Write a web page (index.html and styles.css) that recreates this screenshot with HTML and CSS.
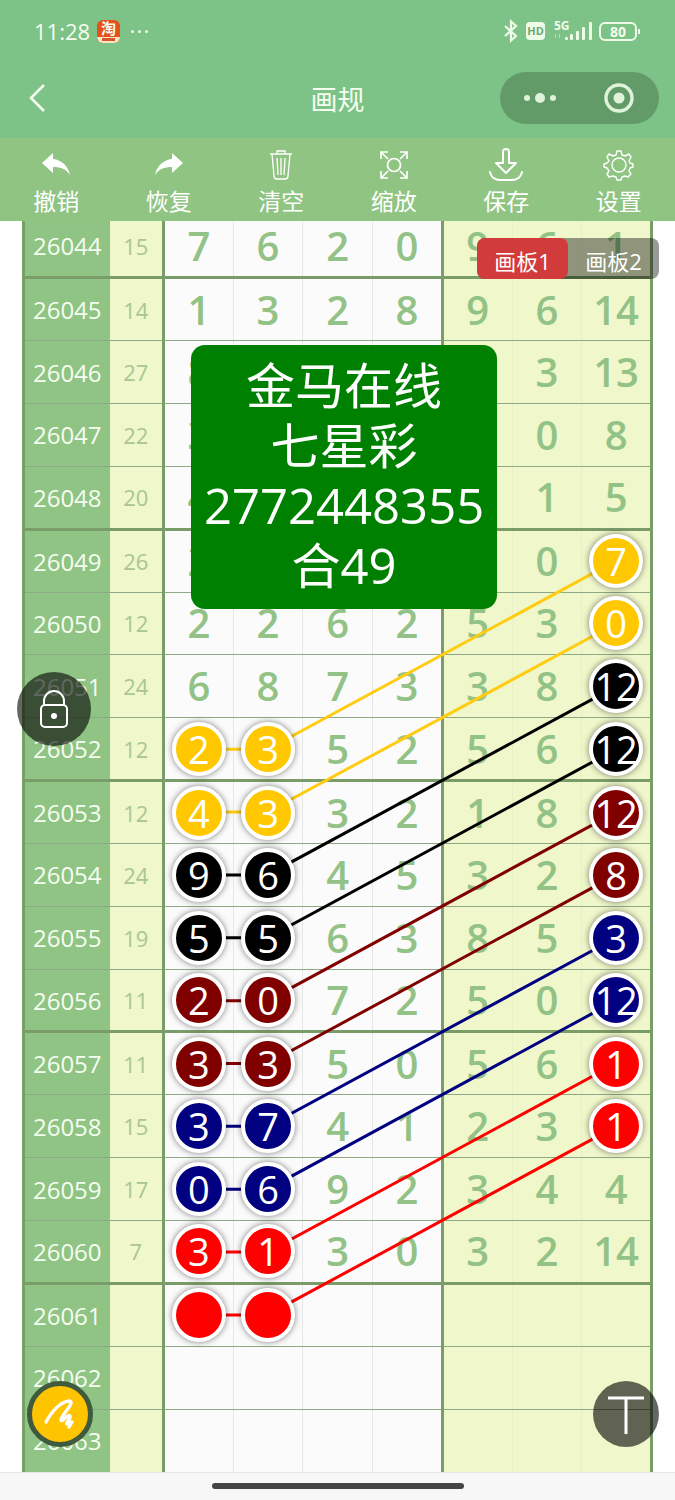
FILE: index.html
```html
<!DOCTYPE html>
<html lang="zh-CN">
<head>
    <meta charset="UTF-8">
    <meta name="viewport" content="width=device-width, initial-scale=1.0">
    <title>画规</title>
    <link rel="stylesheet" href="styles.css">
</head>
<body>
<div class="app">
    <header class="header">
        <div class="status-bar">
            <span class="time">11:28</span>
            <span class="app-badge"><b>淘</b><i></i></span>
            <span class="more-dots"><i></i><i></i><i></i></span>
            <div class="status-icons">
                <svg width="16" height="24" viewBox="0 0 16 24" fill="none" stroke="#effbe9" stroke-width="2.2"><path d="M2 7l11 10-5 4.5v-19L13 7 2 17"/></svg>
                <span class="hd">HD</span>
                <svg class="signal" width="40" height="24" viewBox="0 0 40 24" fill="#effbe9">
                    <text x="0" y="11" font-size="12" font-weight="700">5G</text>
                    <path opacity=".5" d="M1 15h1v4H1zM5 15h1v4H5z"/>
                    <rect x="11" y="18" width="3" height="3" rx="1"/>
                    <rect x="16" y="15" width="3" height="6" rx="1"/>
                    <rect x="22" y="12" width="3" height="9" rx="1"/>
                    <rect x="28" y="8" width="3" height="13" rx="1"/>
                    <rect x="35" y="3" width="3" height="18" rx="1"/>
                </svg>
                <span class="battery">80</span>
            </div>
        </div>
        <div class="nav-bar">
            <button class="back-btn" aria-label="返回">
                <svg width="20" height="30" viewBox="0 0 20 30" fill="none" stroke="#f4fdf0" stroke-width="2.6"><path d="M18 2L5 15l13 13"/></svg>
            </button>
            <h1>画规</h1>
            <div class="capsule">
                <button aria-label="更多"><svg width="32" height="12" viewBox="0 0 32 12" fill="#e0f2da"><circle cx="3" cy="6" r="3"/><circle cx="16" cy="6" r="5"/><circle cx="29" cy="6" r="3"/></svg></button>
                <button aria-label="关闭"><svg width="30" height="30" viewBox="0 0 30 30"><circle cx="15" cy="15" r="13" fill="none" stroke="#e0f2da" stroke-width="3.4"/><circle cx="15" cy="15" r="5.5" fill="#e0f2da"/></svg></button>
            </div>
        </div>
    </header>

    <nav class="toolbar">
        <button class="tool-btn">
            <svg width="34" height="34" viewBox="0 0 34 34" fill="#fff"><path d="M3 15L14 5v6c9 1 15 7 17 16-4-6-9-8-17-8v6z"/></svg>
            撤销
        </button>
        <button class="tool-btn">
            <svg width="34" height="34" viewBox="0 0 34 34" fill="#fff"><path d="M31 15L20 5v6C11 12 5 18 3 27c4-6 9-8 17-8v6z"/></svg>
            恢复
        </button>
        <button class="tool-btn">
            <svg width="34" height="34" viewBox="0 0 34 34" fill="none" stroke="#fff" stroke-width="1.3"><path d="M6 6h22M13 6V3h8v3M8 6l2 22q0 3 3 3h8q3 0 3-3l2-22M13 10l1 17M17 10v17M21 10l-1 17"/></svg>
            清空
        </button>
        <button class="tool-btn">
            <svg width="34" height="34" viewBox="0 0 34 34" fill="none" stroke="#fff" stroke-width="1.7"><circle cx="17" cy="17" r="6.5"/><path d="M4 11V4h7M4 4l7 7M23 4h7v7M30 4l-7 7M4 23v7h7M4 30l7-7M30 23v7h-7M30 30l-7-7"/></svg>
            缩放
        </button>
        <button class="tool-btn">
            <svg width="34" height="34" viewBox="0 0 34 34" fill="none" stroke="#fff" stroke-width="2" stroke-linecap="round" stroke-linejoin="round"><path d="M14 15V4q0-3 3-3t3 3v11h7L17 25 7 15zM1 24c1 5 5 8 10 8h12c5 0 9-3 10-8"/></svg>
            保存
        </button>
        <button class="tool-btn">
            <svg width="34" height="34" viewBox="0 0 34 34" fill="none" stroke="#fff" stroke-width="1.4" stroke-linejoin="round"><circle cx="17" cy="17" r="7"/><path d="M15 3h4l1 4 3 1 4-2 2 3-2 4 1 2 3 1v3l-3 1-1 3 2 3-3 3-3-1-3 1-1 3h-4l-1-3-3-1-4 1-2-3 2-3-2-3-3-1v-3l3-1 2-2-2-4 2-3 4 2 3-1z"/></svg>
            设置
        </button>
    </nav>

    <main class="board">
        <div class="sheet">
            <table class="trend">
                <colgroup><col class="col-period"><col class="col-sum"><col span="7"></colgroup>
                <tbody>
                    <tr class="group-end"><th>26044</th><td>15</td><td>7</td><td>6</td><td>2</td><td>0</td><td>9</td><td>6</td><td>1</td></tr>
                    <tr><th>26045</th><td>14</td><td>1</td><td>3</td><td>2</td><td>8</td><td>9</td><td>6</td><td>14</td></tr>
                    <tr><th>26046</th><td>27</td><td>8</td><td></td><td></td><td></td><td></td><td>3</td><td>13</td></tr>
                    <tr><th>26047</th><td>22</td><td>3</td><td></td><td></td><td></td><td></td><td>0</td><td>8</td></tr>
                    <tr class="group-end"><th>26048</th><td>20</td><td>4</td><td></td><td></td><td></td><td></td><td>1</td><td>5</td></tr>
                    <tr><th>26049</th><td>26</td><td>2</td><td></td><td></td><td></td><td></td><td>0</td><td><span class="ball yellow">7</span></td></tr>
                    <tr><th>26050</th><td>12</td><td>2</td><td>2</td><td>6</td><td>2</td><td>5</td><td>3</td><td><span class="ball yellow">0</span></td></tr>
                    <tr><th>26051</th><td>24</td><td>6</td><td>8</td><td>7</td><td>3</td><td>3</td><td>8</td><td><span class="ball black">12</span></td></tr>
                    <tr class="group-end"><th>26052</th><td>12</td><td><span class="ball yellow">2</span></td><td><span class="ball yellow">3</span></td><td>5</td><td>2</td><td>5</td><td>6</td><td><span class="ball black">12</span></td></tr>
                    <tr><th>26053</th><td>12</td><td><span class="ball yellow">4</span></td><td><span class="ball yellow">3</span></td><td>3</td><td>2</td><td>1</td><td>8</td><td><span class="ball maroon">12</span></td></tr>
                    <tr><th>26054</th><td>24</td><td><span class="ball black">9</span></td><td><span class="ball black">6</span></td><td>4</td><td>5</td><td>3</td><td>2</td><td><span class="ball maroon">8</span></td></tr>
                    <tr><th>26055</th><td>19</td><td><span class="ball black">5</span></td><td><span class="ball black">5</span></td><td>6</td><td>3</td><td>8</td><td>5</td><td><span class="ball navy">3</span></td></tr>
                    <tr class="group-end"><th>26056</th><td>11</td><td><span class="ball maroon">2</span></td><td><span class="ball maroon">0</span></td><td>7</td><td>2</td><td>5</td><td>0</td><td><span class="ball navy">12</span></td></tr>
                    <tr><th>26057</th><td>11</td><td><span class="ball maroon">3</span></td><td><span class="ball maroon">3</span></td><td>5</td><td>0</td><td>5</td><td>6</td><td><span class="ball red">1</span></td></tr>
                    <tr><th>26058</th><td>15</td><td><span class="ball navy">3</span></td><td><span class="ball navy">7</span></td><td>4</td><td>1</td><td>2</td><td>3</td><td><span class="ball red">1</span></td></tr>
                    <tr><th>26059</th><td>17</td><td><span class="ball navy">0</span></td><td><span class="ball navy">6</span></td><td>9</td><td>2</td><td>3</td><td>4</td><td>4</td></tr>
                    <tr class="group-end"><th>26060</th><td>7</td><td><span class="ball red">3</span></td><td><span class="ball red">1</span></td><td>3</td><td>0</td><td>3</td><td>2</td><td>14</td></tr>
                    <tr><th>26061</th><td></td><td><span class="ball red"></span></td><td><span class="ball red"></span></td><td></td><td></td><td></td><td></td><td></td></tr>
                    <tr><th>26062</th><td></td><td></td><td></td><td></td><td></td><td></td><td></td><td></td></tr>
                    <tr><th>26063</th><td></td><td></td><td></td><td></td><td></td><td></td><td></td><td></td></tr>
                </tbody>
            </table>
            <!-- one unit = one cell, 7 columns x 20 rows -->
            <svg class="links" viewBox="0 0 7 20" preserveAspectRatio="none">
                <polyline class="yellow" points="0.5,8.5 1.5,8.5 6.5,5.5"/>
                <polyline class="yellow" points="0.5,9.5 1.5,9.5 6.5,6.5"/>
                <polyline class="black" points="0.5,10.5 1.5,10.5 6.5,7.5"/>
                <polyline class="black" points="0.5,11.5 1.5,11.5 6.5,8.5"/>
                <polyline class="maroon" points="0.5,12.5 1.5,12.5 6.5,9.5"/>
                <polyline class="maroon" points="0.5,13.5 1.5,13.5 6.5,10.5"/>
                <polyline class="navy" points="0.5,14.5 1.5,14.5 6.5,11.5"/>
                <polyline class="navy" points="0.5,15.5 1.5,15.5 6.5,12.5"/>
                <polyline class="red" points="0.5,16.5 1.5,16.5 6.5,13.5"/>
                <polyline class="red" points="0.5,17.5 1.5,17.5 6.5,14.5"/>
            </svg>
        </div>

        <div class="note">金马在线<br>七星彩<br>2772448355<br>合49</div>

        <div class="board-tabs">
            <button class="active">画板1</button>
            <button>画板2</button>
        </div>

        <button class="float-btn lock-btn" aria-label="锁定">
            <svg width="30" height="40" viewBox="0 0 30 40" fill="none" stroke="#fff" stroke-width="2"><rect x="2" y="16" width="26" height="22" rx="4"/><path d="M5 16v-4a10 10 0 0 1 20 0v4"/><circle cx="15" cy="27" r="3" fill="#fff" stroke="none"/></svg>
        </button>
        <button class="float-btn pen-btn" aria-label="画笔">
            <svg width="34" height="34" viewBox="0 0 34 34" fill="none" stroke="#fff" stroke-width="3.4" stroke-linecap="round" stroke-linejoin="round"><path d="M3 25C9 14 18 4 27 4c5 2-9 14-9 19 1 3 7-7 9-4 1 3-5 7-3 8 2 0 4-3 5-2l-3 5"/></svg>
        </button>
        <button class="float-btn text-btn" aria-label="文字">
            <svg width="38" height="40" viewBox="0 0 38 40" stroke="#fff" stroke-width="3"><path d="M1 4h36M19 4v36"/></svg>
        </button>
    </main>

    <footer class="home-bar"><span></span></footer>
</div>
</body>
</html>
```

FILE: styles.css
```css
* {
    box-sizing: border-box;
}

body {
    margin: 0;
    font-family: "Open Sans", "Noto Sans CJK SC", sans-serif;
    background-color: #fff;
}

button {
    border: none;
    padding: 0;
    background: none;
    color: #fff;
    font-family: inherit;
    cursor: pointer;
}

.app {
    display: flex;
    flex-direction: column;
    height: 100vh;
}

/* 顶部 */
.header {
    background-color: #7dc387;
    color: #f4fdf0;
}

.status-bar {
    display: flex;
    align-items: center;
    height: 62px;
    padding: 0 38px 0 34px;
}

.time {
    font-size: 22px;
    font-weight: 500;
    width: 63px;
}

.app-badge {
    display: flex;
    flex-direction: column;
    width: 23px;
    height: 23px;
    border-radius: 6px;
    overflow: hidden;
    background-color: #e5501c;
    text-align: center;
}

.app-badge b {
    font-size: 15px;
    line-height: 17px;
}

.app-badge i {
    flex: 1;
    border: solid #f6e6c4;
    border-width: 1px 5px 2px;
    background-color: #d5552c;
}

.more-dots {
    display: flex;
    gap: 4px;
    margin-left: 11px;
}

.more-dots i {
    width: 3px;
    height: 3px;
    border-radius: 50%;
    background-color: #effbe9;
}

.status-icons {
    display: flex;
    align-items: center;
    margin-left: auto;
}

.hd {
    margin: 0 9px 0 7px;
    width: 19px;
    line-height: 18px;
    border-radius: 4px;
    background-color: #effbe9;
    color: #6aa873;
    font-size: 11px;
    font-weight: 700;
    text-align: center;
}

.signal {
    overflow: visible;
}

.battery {
    position: relative;
    width: 38px;
    margin-left: 5px;
    border: 2px solid #effbe9;
    border-radius: 6px;
    font-size: 14px;
    font-weight: 700;
    line-height: 15px;
    text-align: center;
}

.battery::after {
    content: "";
    position: absolute;
    right: -5px;
    top: 5px;
    width: 2px;
    height: 5px;
    background-color: #effbe9;
}

.nav-bar {
    display: grid;
    grid-template-columns: 1fr auto 1fr;
    align-items: center;
    height: 76px;
    padding: 0 16px 4px;
}

.nav-bar h1 {
    margin: 0;
    font-size: 27px;
    font-weight: 400;
}

.back-btn {
    justify-self: start;
    display: flex;
    margin-left: 10px;
}

.capsule {
    justify-self: end;
    display: flex;
    width: 159px;
    height: 52px;
    border-radius: 26px;
    background-color: #629b68;
}

.capsule button {
    flex: 1;
    display: flex;
    align-items: center;
    justify-content: center;
}

/* 工具栏 */
.toolbar {
    display: flex;
    height: 83px;
    background-color: #90c483;
}

.tool-btn {
    flex: 1;
    display: flex;
    flex-direction: column;
    align-items: center;
    padding-top: 10px;
    font-size: 23px;
    line-height: 38px;
}

.tool-btn svg {
    flex: none;
}

/* 走势图 */
.board {
    position: relative;
    flex: 1;
    min-height: 0;
    display: flex;
    flex-direction: column;
    justify-content: flex-end;
    overflow: hidden;
}

.sheet {
    position: relative;
    flex: none;
    height: calc(100% + 6px);
    margin: 0 22px;
}

.trend {
    width: 100%;
    height: 100%;
    table-layout: fixed;
    border-collapse: collapse;
    text-align: center;
}

.trend tr {
    height: 5%;
}

.col-period {
    width: 86px;
}

.col-sum {
    width: 54px;
}

.trend th,
.trend td {
    padding: 0;
    border-bottom: 1px solid #8fa885;
}

.trend .group-end th,
.trend .group-end td {
    border-bottom: 3px solid #7a9c68;
}

.trend tr:last-child th,
.trend tr:last-child td {
    border-bottom: none;
}

.trend th {
    background-color: #8fc484;
    border-left: 3px solid #76a065;
    color: #f6fdf0;
    font-size: 24px;
    font-weight: 400;
}

.trend td {
    background-color: #fbfbfb;
    border-right: 1px solid #e6e6e6;
    color: #93c287;
    font-size: 40px;
    font-weight: 600;
    line-height: 54px;
}

.trend td:nth-child(2) {
    background-color: #eff7cb;
    border-right: 3px solid #7a9c68;
    color: #a9c692;
    font-size: 22px;
    font-weight: 400;
}

.trend td:nth-child(6) {
    border-right: 3px solid #7a9c68;
}

.trend td:nth-child(n+7) {
    background-color: #eff7cb;
    border-right-color: #e8f1c6;
}

.trend td:last-child {
    border-right: 3px solid #7a9c68;
}

.ball {
    position: relative;
    z-index: 2;
    display: block;
    width: 54px;
    height: 54px;
    margin: 0 auto;
    border: 4px solid #fff;
    border-radius: 50%;
    box-shadow: 0 0 6px rgba(0, 0, 0, 0.5);
    color: #fff;
    font-size: 38px;
    font-weight: 400;
    line-height: 46px;
}

.ball.yellow { background-color: #ffc800; }
.ball.black { background-color: #000; }
.ball.maroon { background-color: #800000; }
.ball.navy { background-color: #000080; }
.ball.red { background-color: #f00; }

.links {
    position: absolute;
    z-index: 1;
    top: 0;
    left: 141px;
    width: calc(100% - 143px);
    height: 100%;
    pointer-events: none;
}

.links polyline {
    fill: none;
    stroke-width: 3px;
    vector-effect: non-scaling-stroke;
}

.links .yellow { stroke: #fc1; }
.links .black { stroke: #000; }
.links .maroon { stroke: #800000; }
.links .navy { stroke: #000080; }
.links .red { stroke: #f00; }

.note {
    position: absolute;
    z-index: 3;
    top: 124px;
    left: 191px;
    padding: 10px 13px 14px;
    border-radius: 14px;
    background-color: #008000;
    color: #fff;
    font-size: 49px;
    line-height: 60px;
    text-align: center;
}

.board-tabs {
    position: absolute;
    z-index: 4;
    top: 17px;
    right: 16px;
    display: flex;
    border-radius: 8px;
    background-color: rgba(0, 0, 0, 0.4);
}

.board-tabs button {
    width: 91px;
    height: 41px;
    border-radius: 8px;
    font-size: 22px;
    padding-top: 3px;
}

.board-tabs .active {
    background-color: #d23b3b;
}

/* 悬浮按钮 */
.float-btn {
    position: absolute;
    z-index: 5;
    display: flex;
    align-items: center;
    justify-content: center;
    width: 66px;
    height: 66px;
    border-radius: 50%;
    background-color: rgba(0, 0, 0, 0.6);
}

.lock-btn {
    left: 17px;
    top: 451px;
    width: 74px;
    height: 74px;
}

.pen-btn {
    left: 27px;
    bottom: 25px;
    border: 5px solid #3f5a3c;
    background-color: #ffc400;
}

.text-btn {
    right: 16px;
    bottom: 25px;
}

.home-bar {
    display: flex;
    justify-content: center;
    height: 28px;
    padding-top: 10px;
    border-top: 1px solid #e4e4e4;
    background-color: #f7f7f7;
}

.home-bar span {
    width: 252px;
    height: 6px;
    border-radius: 3px;
    background-color: #444;
}
```
